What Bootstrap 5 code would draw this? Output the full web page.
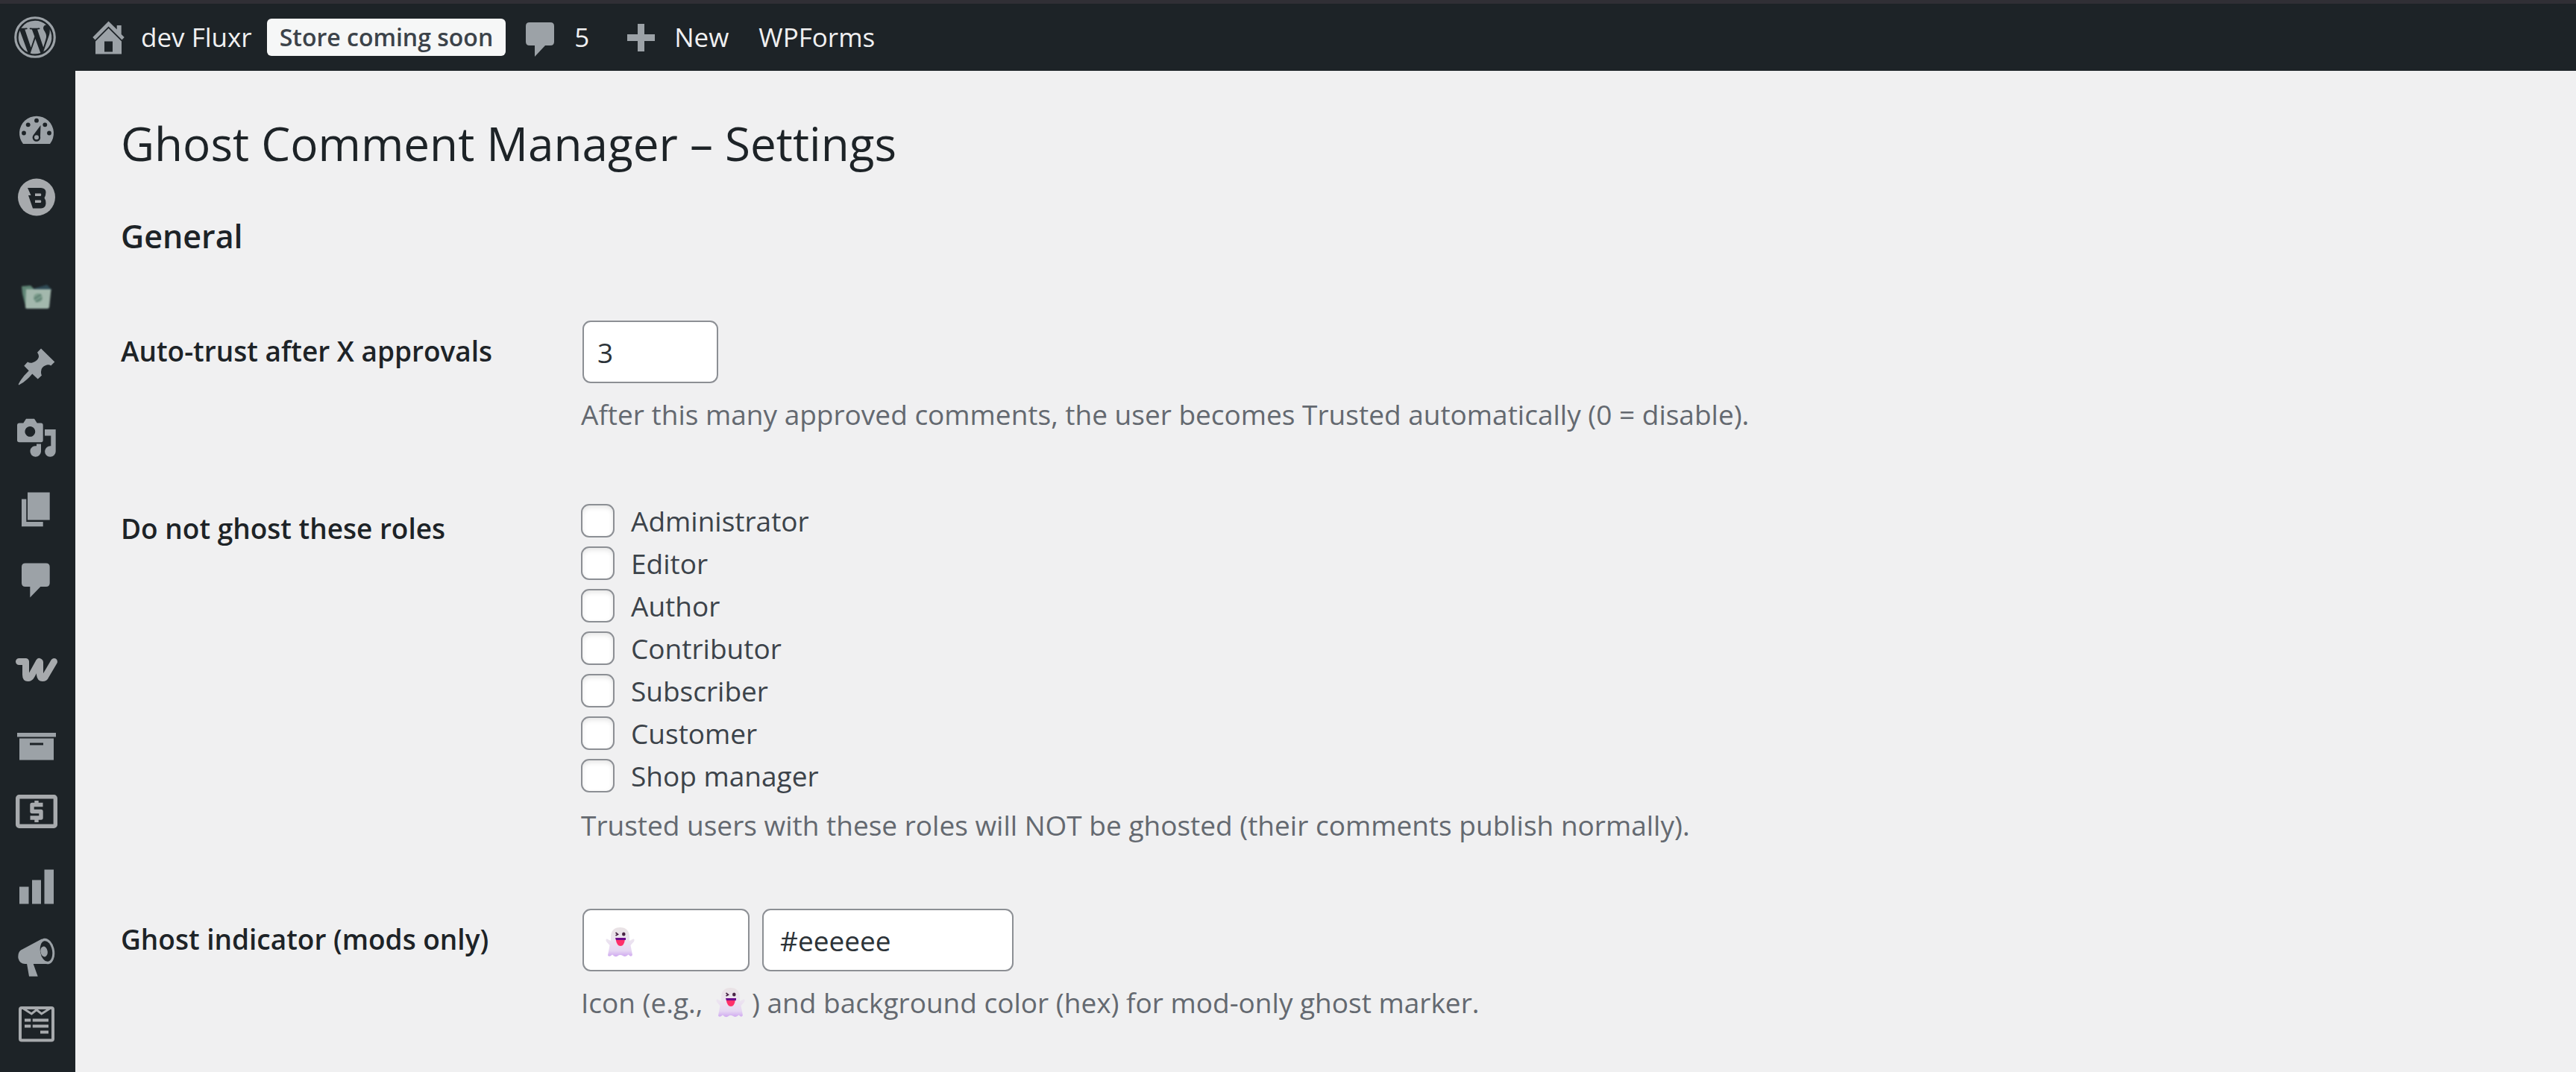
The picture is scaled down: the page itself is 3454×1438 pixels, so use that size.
<!DOCTYPE html>
<html lang="en">
<head>
<meta charset="utf-8">
<meta name="viewport" content="width=device-width, initial-scale=1">
<title>Ghost Comment Manager – Settings</title>
<link href="https://cdn.jsdelivr.net/npm/bootstrap@5.3.0/dist/css/bootstrap.min.css" rel="stylesheet">
<style>
  :root { --bar: #1d2327; --icon: #9ca2a7; --brand: #a7aaad; --line: #8c8f94; }
  body { font-family: "Open Sans", "Noto Sans", sans-serif; font-size: 37px; line-height: 60px; color: #3c434a; background: #f0f0f1; }
  h1 { font-size: 62px; line-height: 80px; font-weight: 400; color: var(--bar); }
  h2 { font-size: 43px; line-height: 60px; font-weight: 600; color: var(--bar); margin: 55px 0 83px; }

  .admin-bar { height: 95px; flex: none; border-top: 5px solid #302f35; background: var(--bar); font-size: 35px; padding-left: 19px; }
  .admin-bar a { color: #f0f0f1; gap: 16px; }
  .admin-bar a.site-link { margin-left: 42px; }
  .admin-bar a.store-badge { margin: 0 20px; padding: 0 17px; font-size: 32px; line-height: 50px; font-weight: 600; color: #3c434a; background: #f6f7f7; border-radius: 6px; }
  .admin-bar a.new-link { margin-left: 42px; }
  .admin-bar a.forms-link { margin-left: 40px; }

  .glyph { width: 56px; height: 56px; flex: none; overflow: visible; fill: var(--icon); }
  .cut { fill: var(--bar); }

  .admin-menu { width: 101px; flex: none; background: var(--bar); padding-top: 32px; }
  .admin-menu a { height: 95px; padding-left: 21px; }
  .admin-menu .brand-item { padding-bottom: 13px; }
  .admin-menu .brand-item .glyph { fill: var(--brand); }
  .admin-menu .group-start { margin-top: 33px; }

  .settings { padding: 57px 61px 0; }
  .settings-form { gap: 82px; }
  .setting-name { width: 617px; flex: none; padding-top: 16px; line-height: 50px; font-weight: 600; color: var(--bar); }
  .hint { color: #646970; margin: 12px 0 0; }
  .settings .form-control { height: 84px; padding: 0 22px; border: 2px solid var(--line); border-radius: 11px; font-size: 37px; color: #2c3338; background: #fff; }
  .settings .num-field { width: 182px; margin-left: 2px; padding: 0 18px; }
  .icon-field { width: 224px; }
  .color-field { width: 337px; }
  .field-pair { gap: 17px; margin-left: 2px; }
  .roles { padding-top: 2px; }
  .roles + .hint { margin-top: 8px; }
  .role { height: 57px; gap: 22px; }
  .settings .role .form-check-input { width: 45px; height: 45px; margin: 0; border: 2px solid var(--line); border-radius: 11px; background-color: #fff; box-shadow: inset 0 3px 6px rgba(0,0,0,.1); }
  .ghost { width: 40px; height: 40px; overflow: visible; }
  .ghost-over { left: 31px; top: 25px; pointer-events: none; }
  .hint .ghost { margin: 0 8px; vertical-align: -6px; }
</style>
</head>
<body class="d-flex flex-column min-vh-100">
<svg width="0" height="0" class="position-absolute" aria-hidden="true">
  <defs>
    <linearGradient id="ghost-skin" x1="0" y1="0" x2="0" y2="1">
      <stop offset="0" stop-color="#e9e2e4"/><stop offset=".45" stop-color="#ece4f0"/><stop offset=".8" stop-color="#e6d6f3"/><stop offset="1" stop-color="#cfa8f0"/>
    </linearGradient>
    <symbol id="ghost" viewBox="0 0 40 40">
      <path fill="url(#ghost-skin)" d="M7 13C7 4 12 0 19.500 0S32 4 32 13V18L37 15.500Q39.500 15.500 38 19L33.500 24 36 37Q34 40.500 30.500 36.500 27 40.500 23 38 19.500 36 16 38.500 12.500 40.500 9 36.500 5 40.500 3 37.500L5.500 24 1 19Q-.5 15.500 2 15.500L7 18Z"/>
      <path fill="none" stroke="#4a2545" stroke-width="1.600" d="M13.500 7 16.500 9.300 13.500 11"/>
      <ellipse cx="24.300" cy="9" rx="2.300" ry="2.500" fill="#4a2545"/>
      <path fill="#ff2f6a" d="M13.500 15.500H26Q25 25 20 25T13.500 15.500Z"/>
      <path fill="#6d0a8c" d="M13 14H27V17H14Z"/>
    </symbol>
  </defs>
</svg>

<header class="admin-bar d-flex align-items-center">
  <a href="#" class="d-flex" aria-label="About WordPress">
    <svg class="glyph" viewBox="0 0 16 16"><circle cx="8" cy="8" r="7.500" fill="none" stroke="#9ca2a7" stroke-width=".9"/><g transform="translate(8 8) scale(.93) translate(-8 -8)"><path d="M12.633 7.653c0-.848-.305-1.435-.566-1.892l-.08-.13c-.317-.51-.594-.958-.594-1.480 0-.63.478-1.218 1.152-1.218q.03 0 .058.003l.031.003A6.840 6.840 0 0 0 8 1.137 6.860 6.860 0 0 0 2.266 4.230c.16.005.313.009.442.009.717 0 1.828-.087 1.828-.087.37-.022.414.521.044.565 0 0-.371.044-.785.065l2.500 7.434 1.500-4.506-1.070-2.929c-.369-.022-.719-.065-.719-.065-.37-.022-.326-.588.043-.566 0 0 1.134.087 1.808.087.718 0 1.830-.087 1.830-.087.37-.022.413.522.043.566 0 0-.372.043-.785.065l2.480 7.377.684-2.287.054-.173c.27-.86.469-1.495.469-2.046zM1.137 8a6.860 6.860 0 0 0 3.868 6.176L1.730 5.206A6.800 6.800 0 0 0 1.137 8M6.061 14.583 8.121 8.600l2.109 5.780q.02.05.049.094a6.850 6.850 0 0 1-4.218.109m7.960-9.876q.046.328.047.706c0 .696-.13 1.479-.522 2.458l-2.096 6.060a6.860 6.860 0 0 0 2.572-9.224z"/></g></svg>
  </a>
  <a href="#" class="site-link d-flex align-items-center text-decoration-none">
    <svg class="glyph" viewBox="0 0 56 56"><path d="M28.500 6.500 39.700 17.500V12H45.700V24L49.700 28 46.500 31.500 28.500 13.500 10.500 31.500 7.300 28Z"/><path d="M28.500 16 46 33.500V50.500H11V33.500ZM23 33.500V47.500H34V33.500Z" fill-rule="evenodd"/></svg>
    <span>dev Fluxr</span>
  </a>
  <a href="#" class="store-badge text-decoration-none">Store coming soon</a>
  <a href="#" class="d-flex align-items-center text-decoration-none" aria-label="5 comments in moderation">
    <svg class="glyph" viewBox="0 0 56 56"><path d="M12 8H40Q45 8 45 13V34Q45 39 40 39H33L19 54V39H12Q7 39 7 34V13Q7 8 12 8Z"/></svg>
    <span>5</span>
  </a>
  <a href="#" class="new-link d-flex align-items-center text-decoration-none">
    <svg class="glyph" viewBox="0 0 56 56"><path d="M23 10H32V24H46V33H32V47H23V33H9V24H23Z"/></svg>
    <span>New</span>
  </a>
  <a href="#" class="forms-link text-decoration-none">WPForms</a>
</header>

<div class="d-flex align-items-stretch flex-grow-1">
  <nav class="admin-menu d-flex flex-column" aria-label="Main menu">
    <a href="#" class="d-flex align-items-center" aria-label="Dashboard">
      <svg class="glyph" viewBox="0 0 56 56"><path d="M10 46A23 23 0 1 1 46 46Z"/><g class="cut"><circle cx="11" cy="31.500" r="2.900"/><circle cx="16.700" cy="20.300" r="2.900"/><circle cx="28" cy="14.700" r="2.900"/><circle cx="39.300" cy="20.300" r="2.900"/><circle cx="45" cy="31.500" r="2.900"/><path d="M33.500 21 23.500 34.500A5.300 5.300 0 1 0 33 36Z"/></g><circle cx="28" cy="37.300" r="3"/></svg>
    </a>
    <a href="#" class="brand-item d-flex align-items-center" aria-label="Bit plugins">
      <svg class="glyph" viewBox="0 0 56 56"><circle cx="28" cy="29.500" r="25"/><path class="cut" fill-rule="evenodd" d="M16 17H34Q40.500 17.500 40.500 23 40.500 27 38.500 30.500 40.500 33 40.500 38 40 44 34 44.500H23L17 27H20.500ZM26 24.500V28H33.500Q35 26 33.500 24.500ZM26 33.500V37H33.500Q35 35 33.500 33.500Z"/></svg>
    </a>
    <a href="#" class="group-start d-flex align-items-center" aria-label="File manager">
      <svg class="glyph" viewBox="0 0 56 56" style="filter:blur(1px)"><path fill="#5f8575" d="M8 14 20 13 24 17H38V40H13L9 24Z"/><path fill="#2f4a55" d="M24 17 42 12 48 18 44 30H26Z"/><path fill="#a3b8ad" d="M14 18H47.500L45 42.500Q44 44 42 44H15Q13 44 13 42Z"/><circle cx="30" cy="29.500" r="6" fill="#7c9c8c"/><path fill="none" stroke="#5b7d70" stroke-width="2" d="M25 31 34 25M27 35 35 30"/></svg>
    </a>
    <a href="#" class="d-flex align-items-center" aria-label="Posts">
      <svg class="glyph" viewBox="0 0 56 56"><path d="M34 2.500 52.300 20.500 47.300 25.500Q44 23.500 40.500 25 34.500 27 34.200 32.500 33.500 35.500 35 38.500L29.700 43.500 22.300 36.500Q13 47.500 4.200 51.500L3.700 50.500Q8 41.500 17.700 32.200L11.300 25.800 16 20.500Q19.500 22.500 23 21.200 29.500 19.500 31 13.800 31 10.500 29 7.800Z"/></svg>
    </a>
    <a href="#" class="d-flex align-items-center" aria-label="Media">
      <svg class="glyph" viewBox="0 0 56 56"><path fill-rule="evenodd" d="M5 7.500H10.300L14 1.800H25L28.700 7.500H34Q36.700 7.500 36.700 10.500V30.500Q36.700 33.200 34 33.200H5Q2 33.200 2 30.500V10.500Q2 7.500 5 7.500ZM19.300 12A6.900 6.900 0 1 0 19.310 12Z"/><path d="M39 16H53.700V45.500A7.300 7.300 0 1 1 47.300 38.300V24.500H39ZM28 35.500H34V45.500A7.300 7.300 0 1 1 28 38.300Z"/></svg>
    </a>
    <a href="#" class="d-flex align-items-center" aria-label="Pages">
      <svg class="glyph" viewBox="0 0 56 56"><path d="M16 5.500H45.700V42.500H16ZM8 14.500H14.300V45H36.700V51.200H8Z"/></svg>
    </a>
    <a href="#" class="d-flex align-items-center" aria-label="Comments">
      <svg class="glyph" viewBox="0 0 56 56"><path d="M13 5.500H40.700Q45.700 5.500 45.700 10.500V32Q45.700 37 40.700 37H33.300L19.300 51.500V37H13Q8 37 8 32V10.500Q8 5.500 13 5.500Z"/></svg>
    </a>
    <a href="#" class="brand-item group-start d-flex align-items-center" aria-label="WooCommerce">
      <svg class="glyph" viewBox="0 0 56 56"><path fill="none" stroke="#a7aaad" stroke-width="9" stroke-linecap="round" stroke-linejoin="round" d="M4.500 16.500H13.500V34Q13.500 38.500 16.500 38.500T21 35.500L31.500 16.500 32.500 17V34Q33 38.500 36 38.500T40 36L51.500 16.500"/></svg>
    </a>
    <a href="#" class="d-flex align-items-center" aria-label="Products">
      <svg class="glyph" viewBox="0 0 56 56"><path fill-rule="evenodd" d="M2 10H54V15.500H2ZM5 17.500H51V46.500H5ZM19 23.500V26.500H37V23.500Z"/></svg>
    </a>
    <a href="#" class="brand-item d-flex align-items-center" aria-label="Payments">
      <svg class="glyph" viewBox="0 0 56 56"><rect x="2.700" y="7.700" width="50.600" height="39.600" rx="2" fill="none" stroke="#a7aaad" stroke-width="5.400"/><path fill="none" stroke="#a7aaad" stroke-width="5.400" stroke-linejoin="round" d="M36.500 18.500H22V27.500H34V36H19.500M28 13V19M28 36V42"/></svg>
    </a>
    <a href="#" class="d-flex align-items-center" aria-label="Analytics">
      <svg class="glyph" viewBox="0 0 56 56"><path d="M5 26.500H17.500V49.500H5ZM22 17.500H34V49.500H22ZM38.500 3.500H51V49.500H38.500Z"/></svg>
    </a>
    <a href="#" class="d-flex align-items-center" aria-label="Marketing">
      <svg class="glyph" viewBox="0 0 56 56"><path d="M7 16.500 35 1.500 44 35H12.500Q5.500 35 3.500 27.500 2.500 20 7 16.500ZM15 34.500H23.500L29.700 51.800H18Z"/><g transform="rotate(-10 41 18)"><ellipse cx="41" cy="18" rx="11" ry="17.500"/><ellipse class="cut" cx="41" cy="18" rx="8" ry="14"/><ellipse cx="38" cy="18" rx="4.700" ry="7"/></g></svg>
    </a>
    <a href="#" class="brand-item d-flex align-items-center" aria-label="WPForms">
      <svg class="glyph" viewBox="0 0 56 56"><rect x="6" y="6" width="44" height="43.500" rx="2" fill="none" stroke="#a7aaad" stroke-width="4"/><path fill="none" stroke="#a7aaad" stroke-width="3" d="M10.500 7 21.300 14 28 8.500 34.700 14 45.500 7"/><path d="M12 20.500H20.300V24.500H12ZM22.700 20.500H44V24.500H22.700ZM12 28.500H20.300V32.500H12ZM22.700 28.500H44V32.500H22.700ZM33 36.500H44V40.500H33Z"/></svg>
    </a>
  </nav>

  <main class="settings flex-grow-1">
    <h1 class="m-0">Ghost Comment Manager – Settings</h1>
    <h2>General</h2>
    <form class="settings-form d-flex flex-column">
      <div class="d-flex">
        <label class="setting-name" for="auto-trust">Auto-trust after X approvals</label>
        <div>
          <input class="form-control num-field" id="auto-trust" type="text" inputmode="numeric" value="3">
          <p class="hint">After this many approved comments, the user becomes Trusted automatically (0 = disable).</p>
        </div>
      </div>
      <div class="d-flex" role="group" aria-labelledby="roles-name">
        <div class="setting-name" id="roles-name">Do not ghost these roles</div>
        <div>
          <div class="roles">
            <div class="role d-flex align-items-center"><input class="form-check-input" type="checkbox" id="r1"><label for="r1">Administrator</label></div>
            <div class="role d-flex align-items-center"><input class="form-check-input" type="checkbox" id="r2"><label for="r2">Editor</label></div>
            <div class="role d-flex align-items-center"><input class="form-check-input" type="checkbox" id="r3"><label for="r3">Author</label></div>
            <div class="role d-flex align-items-center"><input class="form-check-input" type="checkbox" id="r4"><label for="r4">Contributor</label></div>
            <div class="role d-flex align-items-center"><input class="form-check-input" type="checkbox" id="r5"><label for="r5">Subscriber</label></div>
            <div class="role d-flex align-items-center"><input class="form-check-input" type="checkbox" id="r6"><label for="r6">Customer</label></div>
            <div class="role d-flex align-items-center"><input class="form-check-input" type="checkbox" id="r7"><label for="r7">Shop manager</label></div>
          </div>
          <p class="hint">Trusted users with these roles will NOT be ghosted (their comments publish normally).</p>
        </div>
      </div>
      <div class="d-flex">
        <label class="setting-name" for="ghost-icon">Ghost indicator (mods only)</label>
        <div>
          <div class="field-pair d-flex">
            <div class="icon-field position-relative">
              <input class="form-control" id="ghost-icon" type="text">
              <svg class="ghost ghost-over position-absolute" aria-hidden="true"><use href="#ghost"/></svg>
            </div>
            <div class="color-field"><input class="form-control" type="text" value="#eeeeee" aria-label="Background color"></div>
          </div>
          <p class="hint">Icon (e.g., <svg class="ghost" role="img" aria-label="ghost"><use href="#ghost"/></svg>) and background color (hex) for mod-only ghost marker.</p>
        </div>
      </div>
    </form>
  </main>
</div>
<script src="https://cdn.jsdelivr.net/npm/bootstrap@5.3.0/dist/js/bootstrap.bundle.min.js"></script>
</body>
</html>
